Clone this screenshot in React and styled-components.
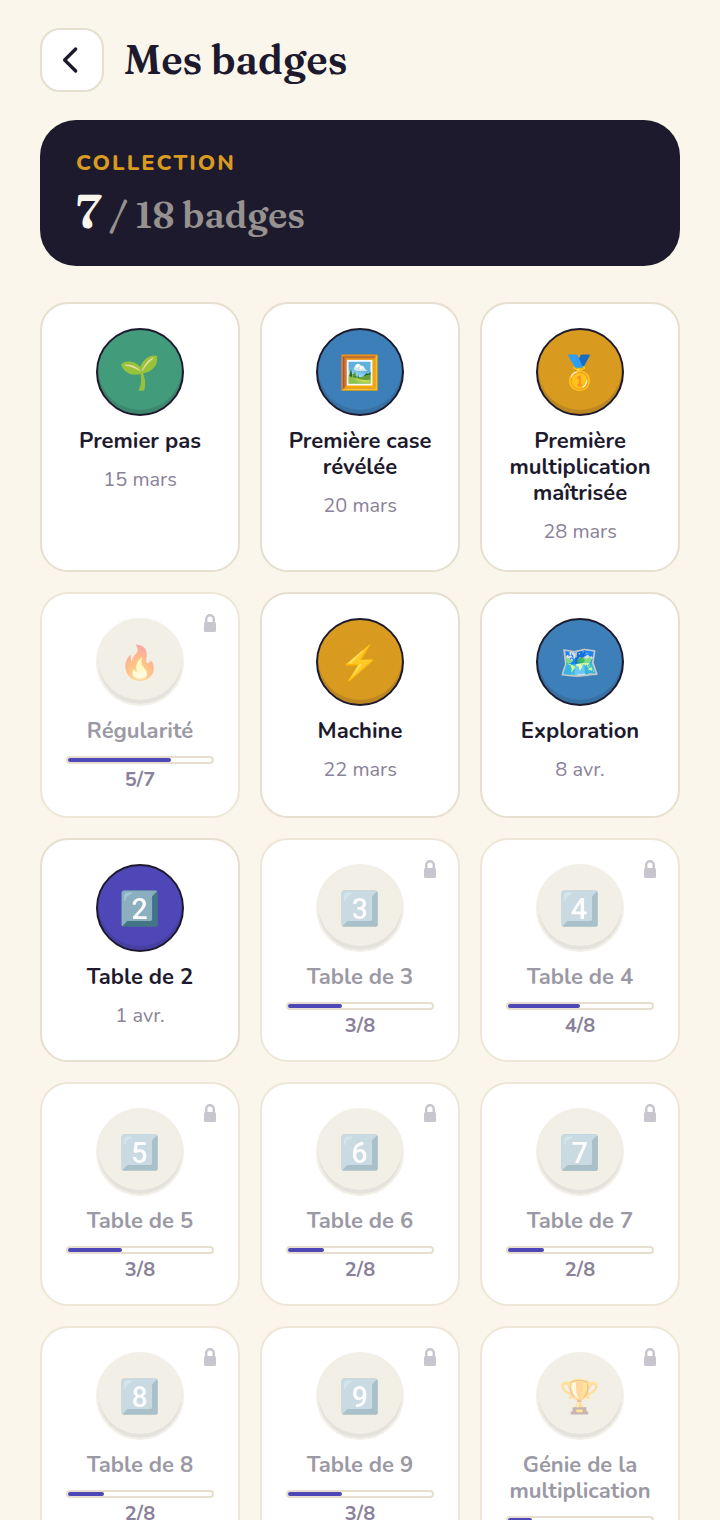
import React from "react";
import styled, { createGlobalStyle } from "styled-components";

const GlobalStyle = createGlobalStyle`
  * {
    box-sizing: border-box;
  }

  body {
    margin: 0;
    background: #faf6eb;
    color: #1e1a2e;
    font-family: Nunito, Lato, "Liberation Sans", sans-serif;
  }
`;

const serif = `Fraunces, "Liberation Serif", serif`;

const Page = styled.main`
  padding: 28px 40px;
`;

const Header = styled.header`
  display: flex;
  align-items: center;
  gap: 20px;
  margin-bottom: 28px;
`;

const BackButton = styled.button`
  display: flex;
  align-items: center;
  justify-content: center;
  width: 64px;
  height: 64px;
  padding: 0;
  border: 2px solid #e6dfcf;
  border-radius: 20px;
  background: #fff;
  color: #1e1a2e;
`;

const Title = styled.h1`
  margin: 0;
  font-family: ${serif};
  font-size: 40px;
  font-weight: 600;
  line-height: 52px;
`;

//dark panel with the total
const Summary = styled.section`
  margin-bottom: 36px;
  padding: 28px 36px;
  border-radius: 36px;
  background: #1e1a2e;
`;

const SummaryLabel = styled.div`
  color: #d99a20;
  font-size: 22px;
  font-weight: 800;
  line-height: 30px;
  letter-spacing: 2px;
  text-transform: uppercase;
`;

const SummaryCount = styled.div`
  margin-top: 6px;
  color: #faf6eb;
  font-family: ${serif};
  font-size: 48px;
  font-weight: 600;
  line-height: 54px;
`;

const SummaryTotal = styled.span`
  color: #96928f;
  font-size: 36px;
  line-height: 36px;
`;

const BadgeGrid = styled.ul`
  display: grid;
  grid-template-columns: repeat(3, minmax(0, 1fr));
  grid-template-rows: auto minmax(226px, auto);
  gap: 20px;
  margin: 0;
  padding: 0;
  list-style: none;
`;

const Card = styled.li`
  position: relative;
  display: flex;
  flex-direction: column;
  align-items: center;
  padding: 24px;
  border: 2px solid ${props => (props.$locked ? "#eee7d7" : "#e6dfcf")};
  border-radius: 28px;
  background: #fff;
  text-align: center;
`;

const Medal = styled.div`
  display: flex;
  align-items: center;
  justify-content: center;
  width: 88px;
  height: 88px;
  margin-bottom: 12px;
  padding-top: 2px;
  border: 2px solid ${props => (props.$color ? "#1e1a2e" : "#e3dccb")};
  border-radius: 50%;
  background: ${props => props.$color || "#e3dccb"};
  box-shadow: inset 0 -4px 0 rgba(30, 26, 46, 0.15);
  opacity: ${props => (props.$color ? 1 : 0.45)};
`;

const Emoji = styled.span`
  font-family: "Noto Color Emoji", sans-serif;
  font-size: 33px;
  line-height: 40px;
`;

const Name = styled.h2`
  margin: 0;
  color: ${props => (props.$locked ? "#9b99a4" : "#1e1a2e")};
  font-size: 22px;
  font-weight: 700;
  line-height: 26px;
`;

const EarnedOn = styled.div`
  margin-top: 12px;
  color: #8a8299;
  font-size: 20px;
  line-height: 28px;
`;

const Track = styled.div`
  width: 100%;
  height: 8px;
  margin-top: 12px;
  border: 2px solid #e6dfcf;
  border-radius: 4px;
  background: #fff;
`;

const Fill = styled.div`
  height: 4px;
  border-radius: 2px;
  background: #4f46b8;
`;

const Score = styled.div`
  margin-top: 6px;
  color: #8a8299;
  font-size: 20px;
  font-weight: 700;
  line-height: 20px;
`;

//sits over the corner of a locked card
const LockIcon = styled.svg`
  position: absolute;
  top: 18px;
  right: 20px;
`;

const colors = {
  green: "#429b7a",
  blue: "#3d7fb8",
  gold: "#d99a20",
  purple: "#4f46b8"
};

const badges = [
  { name: "Premier pas", emoji: "🌱", color: "green", date: "15 mars" },
  { name: "Première case révélée", emoji: "🖼️", color: "blue", date: "20 mars" },
  { name: "Première multiplication maîtrisée", emoji: "🥇", color: "gold", date: "28 mars" },
  { name: "Régularité", emoji: "🔥", done: 5, goal: 7 },
  { name: "Machine", emoji: "⚡", color: "gold", date: "22 mars" },
  { name: "Exploration", emoji: "🗺️", color: "blue", date: "8 avr." },
  { name: "Table de 2", emoji: "2️⃣", color: "purple", date: "1 avr." },
  { name: "Table de 3", emoji: "3️⃣", done: 3, goal: 8 },
  { name: "Table de 4", emoji: "4️⃣", done: 4, goal: 8 },
  { name: "Table de 5", emoji: "5️⃣", done: 3, goal: 8 },
  { name: "Table de 6", emoji: "6️⃣", done: 2, goal: 8 },
  { name: "Table de 7", emoji: "7️⃣", done: 2, goal: 8 },
  { name: "Table de 8", emoji: "8️⃣", done: 2, goal: 8 },
  { name: "Table de 9", emoji: "9️⃣", done: 3, goal: 8 },
  { name: "Génie de la multiplication", emoji: "🏆", done: 6, goal: 36 }
];

const Badge = ({ badge }) => {
  const locked = !badge.date;
  return (
    <Card $locked={locked}>
      {locked && (
        <LockIcon width="16" height="22" viewBox="0 0 16 22" aria-hidden="true">
          <path
            d="M4.2 10V7a3.8 3.8 0 0 1 7.6 0V10"
            fill="none"
            stroke="#c8c5ce"
            strokeWidth="2.5"
          />
          <rect x="2" y="10" width="12" height="10" rx="1.5" fill="#c8c5ce" />
        </LockIcon>
      )}
      <Medal $color={colors[badge.color]}>
        <Emoji>{badge.emoji}</Emoji>
      </Medal>
      <Name $locked={locked}>{badge.name}</Name>
      {locked ? (
        <>
          <Track>
            <Fill style={{ width: `${(badge.done / badge.goal) * 100}%` }} />
          </Track>
          <Score>
            {badge.done}/{badge.goal}
          </Score>
        </>
      ) : (
        <EarnedOn>{badge.date}</EarnedOn>
      )}
    </Card>
  );
};

const App = () => (
  <>
    <GlobalStyle />
    <Page>
      <Header>
        <BackButton type="button" aria-label="Retour">
          <svg width="36" height="36" viewBox="0 0 36 36" aria-hidden="true">
            <path
              d="M21.7 7L10.6 18L21.7 29"
              fill="none"
              stroke="currentColor"
              strokeWidth="3.3"
              strokeLinecap="round"
              strokeLinejoin="round"
            />
          </svg>
        </BackButton>
        <Title>Mes badges</Title>
      </Header>
      <Summary>
        <SummaryLabel>Collection</SummaryLabel>
        <SummaryCount>
          7<SummaryTotal> / 18 badges</SummaryTotal>
        </SummaryCount>
      </Summary>
      <BadgeGrid>
        {badges.map(badge => (
          <Badge key={badge.name} badge={badge} />
        ))}
      </BadgeGrid>
    </Page>
  </>
);

export default App;
